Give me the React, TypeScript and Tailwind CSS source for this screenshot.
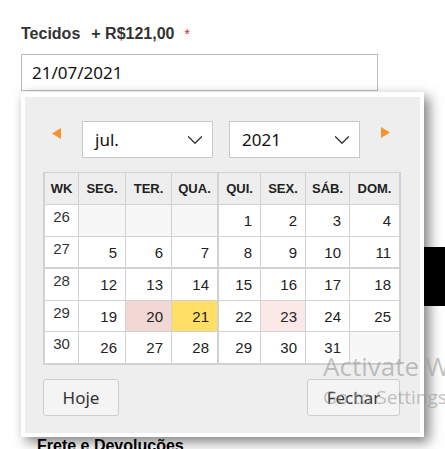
import { ChevronDown } from "lucide-react"

const weeks: { wk: number; days: (number | null)[] }[] = [
  { wk: 26, days: [null, null, null, 1, 2, 3, 4] },
  { wk: 27, days: [5, 6, 7, 8, 9, 10, 11] },
  { wk: 28, days: [12, 13, 14, 15, 16, 17, 18] },
  { wk: 29, days: [19, 20, 21, 22, 23, 24, 25] },
  { wk: 30, days: [26, 27, 28, 29, 30, 31, null] },
]

const heads = ["SEG.", "TER.", "QUA.", "QUI.", "SEX.", "SÁB.", "DOM."]

function Arrow({ dir }: { dir: "left" | "right" }) {
  return (
    <svg width="9" height="11" viewBox="0 0 9 11">
      <polygon points={dir === "left" ? "9,0 0,5.5 9,11" : "0,0 9,5.5 0,11"} fill="#f7932f" />
    </svg>
  )
}

function Select({ value }: { value: string }) {
  return (
    <div className="flex h-[37px] w-[131px] items-center justify-between border border-[#c9c9c9] bg-white pl-[12px] pr-[4px] text-[17px] leading-none text-[#111]">
      <span>{value}</span>
      <ChevronDown className="h-[26px] w-[26px] text-[#333]" strokeWidth={1.2} />
    </div>
  )
}

function dayBg(d: number | null) {
  if (d === null) return "bg-[#f7f7f7]"
  if (d === 20) return "bg-[#f2d8d5]"
  if (d === 21) return "bg-[#ffdf66]"
  if (d === 23) return "bg-[#fbe9e7]"
  return "bg-white"
}

export default function App() {
  return (
    <div className="relative h-[449px] w-[445px] overflow-hidden bg-white font-['Liberation_Sans',Arial,sans-serif]">
      {/* Field */}
      <div className="pl-[21px] pt-[25px]">
        <div className="flex items-baseline text-[16px] font-bold leading-[18px] text-[#333]">
          <span>Tecidos</span>
          <span className="ml-[11px]">+ R$121,00</span>
          <span className="ml-[10px] text-[14px] font-normal text-[#e02020]">*</span>
        </div>
        <div className="mt-[11px] flex h-[37px] w-[357px] items-center border border-[#bbb] pl-[10px] font-['Noto_Sans',sans-serif] text-[17px] leading-none text-[#111]">
          21/07/2021
        </div>
      </div>

      {/* Page content behind the picker */}
      <div className="mt-[156px] flex h-[59px] justify-end">
        <div className="w-[22px] bg-black" />
      </div>
      <div className="mt-[131px] pl-[37px] text-[16px] font-bold leading-[18px] text-black">
        Frete e Devoluções
      </div>

      {/* Date picker */}
      <div className="absolute left-[21px] top-[92px] w-[403px] bg-white px-[4px] pb-[4px] pt-[5px] shadow-[5px_5px_12px_rgba(0,0,0,0.5)]">
        <div className="h-[336px] bg-[#eeeeee] font-['Noto_Sans',sans-serif]">
          <div className="flex items-start pt-[24px]">
            <div className="ml-[27px] mt-[7px] flex">
              <Arrow dir="left" />
            </div>
            <div className="ml-[21px]">
              <Select value="jul." />
            </div>
            <div className="ml-[16px]">
              <Select value="2021" />
            </div>
            <div className="ml-[21px] mt-[6px] flex">
              <Arrow dir="right" />
            </div>
          </div>

          <div className="ml-[18px] mt-[14px] grid w-[358px] grid-cols-[34px_47px_46px_47px_42px_45px_44px_49px] border-x-2 border-b-2 border-t border-[#d2d2d2] font-['Liberation_Sans',Arial,sans-serif]">
            {["WK", ...heads].map((h, i) => (
              <div
                key={h}
                className={`flex h-[32px] items-center justify-center border-b border-[#d2d2d2] bg-[#eeeeee] text-[13px] font-bold text-[#222] ${
                  i === 7 ? "" : i === 3 ? "border-r-2" : "border-r"
                }`}
              >
                {h}
              </div>
            ))}
            {weeks.map((w, r) => {
              const rowBorder = r === 4 ? "" : r === 1 ? "border-b-2" : "border-b"
              const h = r === 3 || r === 4 ? "h-[31px]" : "h-[32px]"
              return [
                <div
                  key={`wk${w.wk}`}
                  className={`${h} ${rowBorder} border-r border-[#d2d2d2] bg-white pt-[4px] text-center text-[15px] leading-[15px] text-[#333]`}
                >
                  {w.wk}
                </div>,
                ...w.days.map((d, c) => (
                  <div
                    key={`${w.wk}-${c}`}
                    className={`${h} ${rowBorder} ${
                      c === 6 ? "" : c === 2 ? "border-r-2" : "border-r"
                    } flex items-center justify-end border-[#d2d2d2] pr-[8px] text-[15px] leading-[15px] text-[#222] ${dayBg(d)}`}
                  >
                    {d ?? ""}
                  </div>
                )),
              ]
            })}
          </div>

          <div className="ml-[18px] mt-[14px] flex w-[357px] justify-between">
            <button className="h-[37px] w-[76px] rounded-[3px] border border-[#cdcdcd] bg-[#f4f4f4] text-[17px] leading-none text-[#333]">
              Hoje
            </button>
            <button className="h-[37px] w-[93px] rounded-[3px] border border-[#cdcdcd] bg-[#f4f4f4] text-[17px] leading-none text-[#333]">
              Fechar
            </button>
          </div>
        </div>
      </div>

      {/* Windows activation watermark */}
      <div className="pointer-events-none absolute left-[323px] top-[353px] whitespace-nowrap font-['Open_Sans',sans-serif] text-[#999]/60">
        <div className="text-[26px] leading-[26px]">Activate Windows</div>
        <div className="mt-[9px] text-[19px] leading-[19px]">Go to Settings to activate Windows.</div>
      </div>
    </div>
  )
}
